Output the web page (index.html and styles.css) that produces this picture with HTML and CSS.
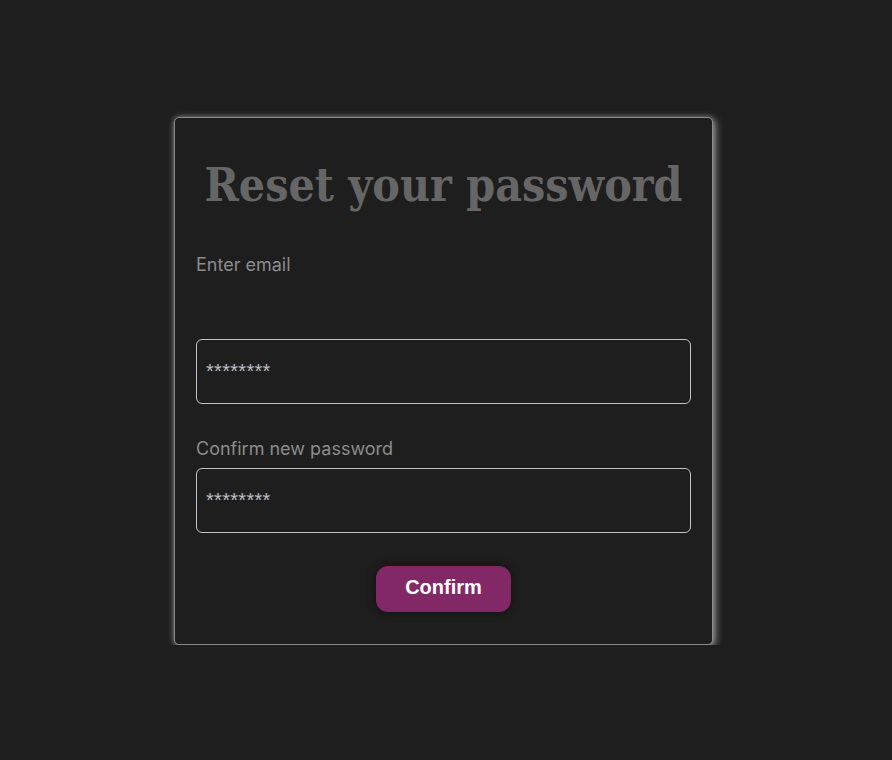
FILE: index.html
```html
<!DOCTYPE html>
<html lang="en">
<head>
  <meta charset="UTF-8" />
  <meta name="viewport" content="width=device-width, initial-scale=1.0"/>
  <title>Reset password</title>
  <link rel="stylesheet" href="styles.css">
</head>
<body>

  <form class="card" id="resetForm">
    <h1 class="title">Reset your password</h1>

    <label class="label label-email" for="email">Enter email</label>
    <input class="field" type="password" id="email" placeholder="********" />

    <label class="label" for="confirm">Confirm new password</label>
    <input class="field" type="password" id="confirm" placeholder="********" />

    <div class="actions">
      <button class="btn" type="submit">Confirm</button>
    </div>
  </form>

</body>
</html>
```

FILE: styles.css
```css
body {
  margin: 0;
  background: #1e1e1e;
  font-family: Inter, "Noto Sans", sans-serif;
}

.card {
  box-sizing: border-box;
  width: 539px;
  height: 528px;
  margin: 117px 0 0 174px;
  padding: 0 21px;
  background: #1e1e1e;
  border: 1px solid #8a8a8a;
  border-radius: 5px;
  box-shadow: 2px 2px 9px rgba(235, 235, 235, 0.6), 0 0 5px rgba(235, 235, 235, 0.25);
}

.title {
  margin: 39px 0 0;
  text-align: center;
  font-family: "DejaVu Serif Condensed", "DejaVu Serif", serif;
  font-stretch: condensed;
  font-weight: bold;
  font-size: 46px;
  line-height: 56px;
  color: #666666;
}

.label {
  display: block;
  margin-top: 34px;
  font-size: 18px;
  color: #8c8c8c;
}

.label-email {
  margin-top: 41px;
  margin-bottom: 64px;
}

.field {
  display: block;
  box-sizing: border-box;
  width: 100%;
  height: 65px;
  padding: 0 9px;
  background: transparent;
  border: 1px solid #c4c4c4;
  border-radius: 6px;
  font-family: "Liberation Sans", Arial, sans-serif;
  font-size: 20px;
  color: #ccc;
}

.field::placeholder {
  color: #bcbcc4;
  letter-spacing: 0.3px;
}

#confirm {
  margin-top: 9px;
}

.actions {
  display: flex;
  justify-content: center;
  margin-top: 33px;
}

.btn {
  width: 135px;
  height: 46px;
  padding: 0 0 3px;
  background: #832867;
  color: white;
  border: none;
  border-radius: 12px;
  font-family: "Liberation Sans", Arial, sans-serif;
  font-weight: bold;
  font-size: 20px;
  box-shadow: 0 0 8px rgba(0, 0, 0, 0.5);
  cursor: pointer;
}
```
